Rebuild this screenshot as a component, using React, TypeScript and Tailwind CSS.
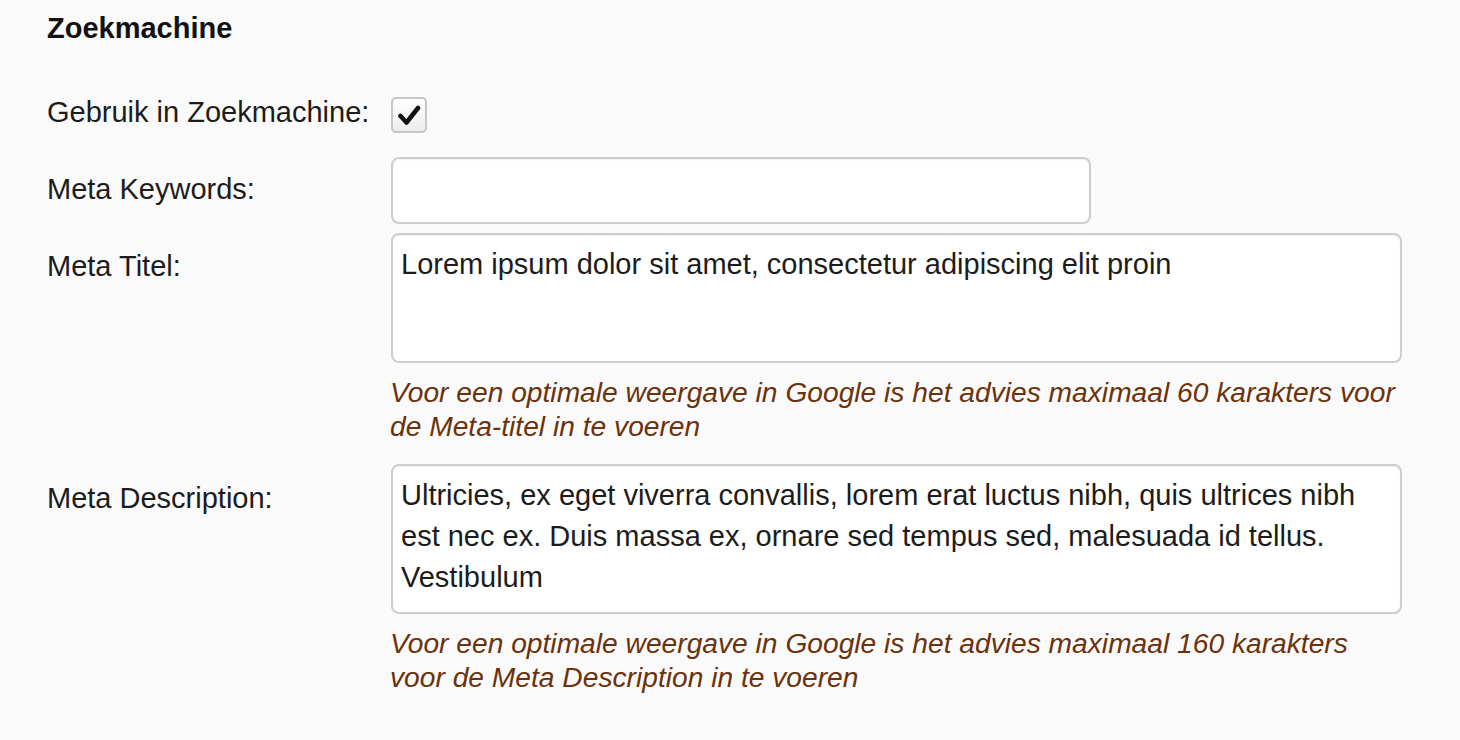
import { useState } from "react";

const font = { fontFamily: '"Liberation Sans", Arial, Helvetica, sans-serif' };

function Label({ children, offset = "" }: { children: React.ReactNode; offset?: string }) {
  return (
    <label className={`block w-[344px] shrink-0 text-[29px] leading-[34px] text-[#1c1c1c] ${offset}`}>{children}</label>
  );
}

function Help({ children }: { children: React.ReactNode }) {
  return <p className="-ml-px mt-[12px] w-[1015px] text-[28.2px] italic leading-[34px] text-[#6b320c]">{children}</p>;
}

const fieldClass =
  "rounded-[8px] border-2 border-[#cdcdcd] bg-white px-[8px] text-[29px] text-[#1c1c1c] shadow-[inset_0_1px_2px_rgba(0,0,0,0.06)] outline-none";

export default function App() {
  const [checked, setChecked] = useState(true);

  return (
    <div className="min-h-screen bg-[#fafafa] pl-[47px] pt-[11px]" style={font}>
      <h2 className="text-[29px] font-bold leading-[34px] text-[#111]">Zoekmachine</h2>

      <div className="mt-[50px] flex items-start">
        <Label>Gebruik in Zoekmachine:</Label>
        <button
          type="button"
          onClick={() => setChecked(!checked)}
          className="mt-[2px] flex h-[36px] w-[36px] items-center justify-center rounded-[5px] border-2 border-[#c6c6c6] bg-gradient-to-b from-white to-[#ececec]"
        >
          {checked && (
            <svg width="24" height="24" viewBox="0 0 24 24">
              <path d="M3.5 13 L9.5 19.5 L21 5" fill="none" stroke="#111" strokeWidth="4.5" strokeLinecap="round" strokeLinejoin="round" />
            </svg>
          )}
        </button>
      </div>

      <div className="mt-[24px] flex items-start">
        <Label offset="pt-[15px]">Meta Keywords:</Label>
        <input type="text" className={`${fieldClass} h-[67px] w-[700px]`} />
      </div>

      <div className="mt-[9px] flex items-start">
        <Label offset="pt-[16px]">Meta Titel:</Label>
        <div>
          <textarea
            className={`${fieldClass} block h-[130px] w-[1011px] resize-none py-[9px] leading-[41px]`}
            defaultValue="Lorem ipsum dolor sit amet, consectetur adipiscing elit proin"
          />
          <Help>Voor een optimale weergave in Google is het advies maximaal 60 karakters voor de Meta-titel in te voeren</Help>
        </div>
      </div>

      <div className="mt-[21px] flex items-start">
        <Label offset="pt-[17px]">Meta Description:</Label>
        <div>
          <textarea
            className={`${fieldClass} block h-[150px] w-[1011px] resize-none overflow-hidden py-[9px] leading-[41px]`}
            defaultValue="Ultricies, ex eget viverra convallis, lorem erat luctus nibh, quis ultrices nibh est nec ex. Duis massa ex, ornare sed tempus sed, malesuada id tellus. Vestibulum"
          />
          <Help>Voor een optimale weergave in Google is het advies maximaal 160 karakters voor de Meta Description in te voeren</Help>
        </div>
      </div>
    </div>
  );
}
